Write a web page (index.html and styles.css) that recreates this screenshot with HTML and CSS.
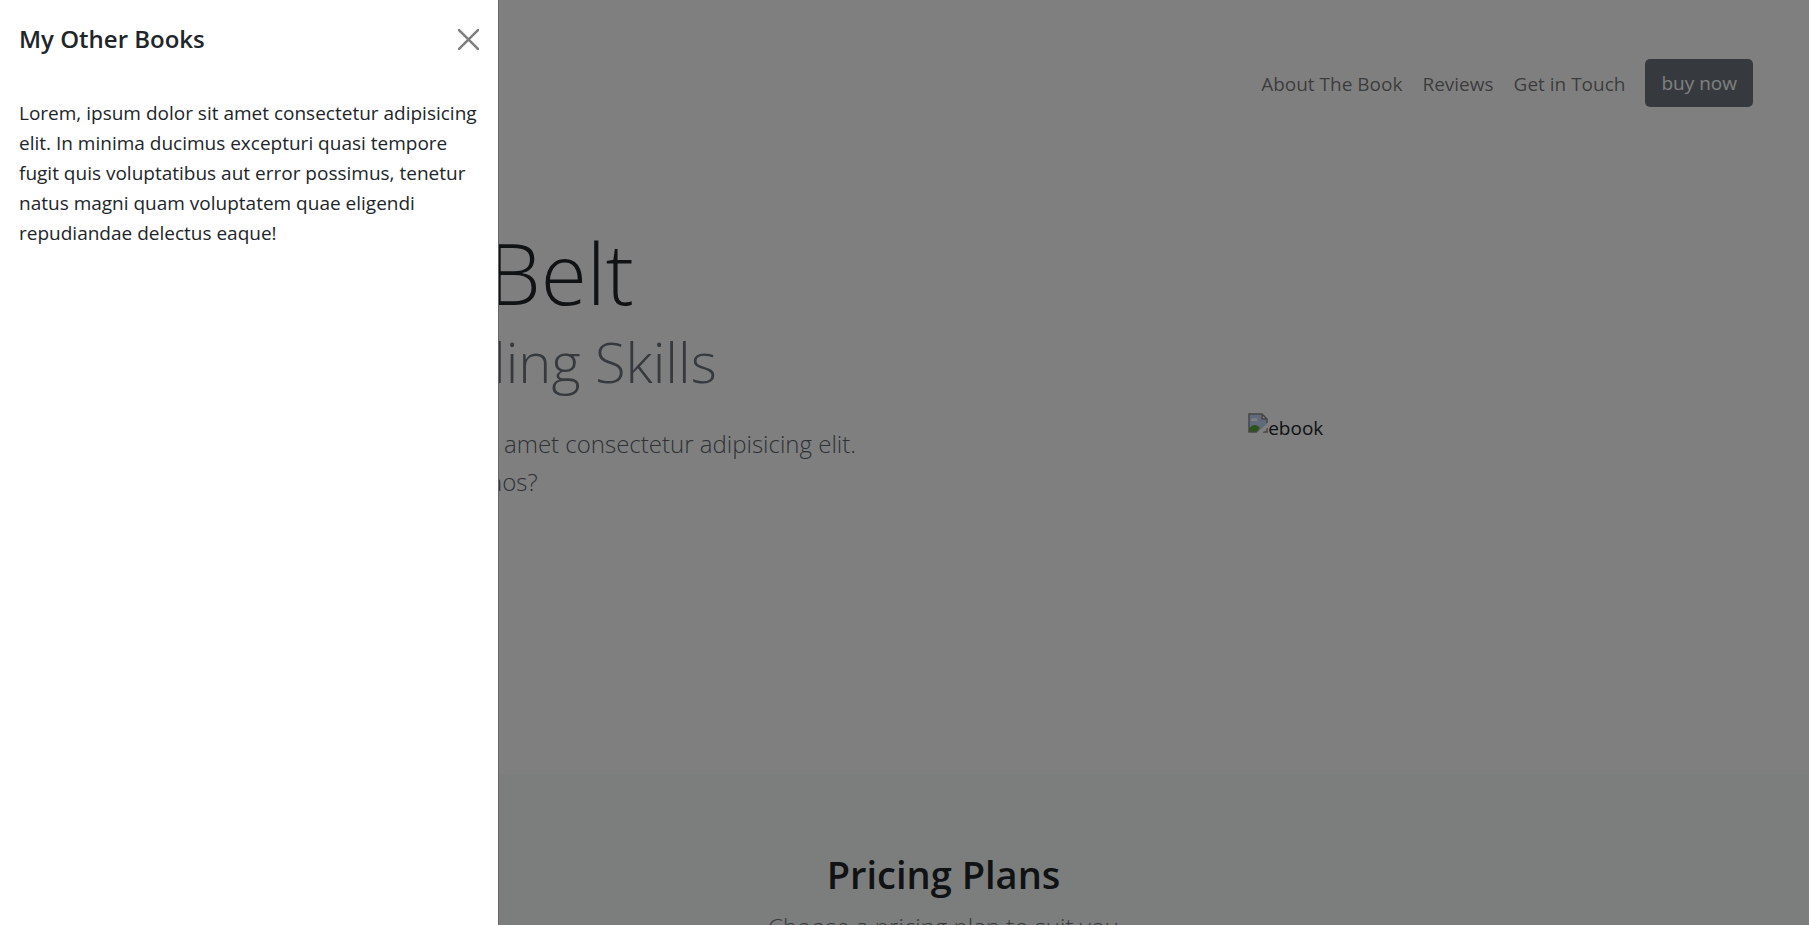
FILE: index.html
```html
<!DOCTYPE html>
<html lang="en">
<head>
<meta charset="utf-8">
<meta name="viewport" content="width=device-width, initial-scale=1">
<title>My Other Books</title>
<link rel="stylesheet" href="styles.css">
</head>
<body>
<div class="page">
  <header class="navbar">
    <nav class="nav-links">
      <a class="nav-link" href="#about">About The Book</a>
      <a class="nav-link" href="#reviews">Reviews</a>
      <a class="nav-link" href="#contact">Get in Touch</a>
      <a class="btn" href="#pricing">buy now</a>
    </nav>
  </header>
  <main>
    <section class="hero" id="about">
      <div class="hero-text">
        <h1><span class="display">Belt</span><span class="subtitle">ling Skills</span></h1>
        <p class="lead"><span class="lead-line">amet consectetur adipisicing elit.</span><span class="lead-end">nos?</span></p>
      </div>
      <div class="hero-image">
        <svg class="broken" viewBox="0 0 20 20" aria-hidden="true">
          <path d="M1 1h13l5 5v5l-9 8H1z" fill="#c3d5f5"/>
          <path d="M3 7c0-2 3-2 3-1 1-2 4-1 3 2H3z" fill="#fff"/>
          <path d="M1 19v-3c3-5 8-5 11-1l-3 4z" fill="#54a838"/>
          <path d="M14 1v5h5z" fill="#fff"/>
          <path d="M19 10V6l-5-5H1v18h8M14 1v5h5M15 19h4v-4" fill="none" stroke="#8c8c8c" stroke-width="1.5"/>
          <path d="M9 20L20 10v4l-6 6z" fill="#fff"/>
        </svg><span>ebook</span>
      </div>
    </section>
    <section class="pricing" id="pricing">
      <h2>Pricing Plans</h2>
      <p class="lead">Choose a pricing plan to suit you</p>
    </section>
  </main>
</div>
<div class="backdrop"></div>
<aside class="drawer" role="dialog" aria-labelledby="drawer-title">
  <div class="drawer-header">
    <h5 id="drawer-title">My Other Books</h5>
    <button class="close" type="button" aria-label="Close">
      <svg viewBox="0 0 20 20" aria-hidden="true"><path d="M1 1l18 18M19 1L1 19" stroke="#000" stroke-width="2.4" stroke-linecap="round"/></svg>
    </button>
  </div>
  <p class="drawer-body">Lorem, ipsum dolor sit amet consectetur adipisicing elit. In minima ducimus excepturi quasi tempore fugit quis voluptatibus aut error possimus, tenetur natus magni quam voluptatem quae eligendi repudiandae delectus eaque!</p>
</aside>
</body>
</html>
```
FILE: styles.css
```css
* { box-sizing: border-box; }
body {
  margin: 0;
  height: 100vh;
  overflow: hidden;
  font: 400 19px/30px "Open Sans", "Noto Sans", sans-serif;
  color: #212529;
  background: #fff;
}
h1, h2, h5, p { margin: 0; }
.page { height: 100vh; overflow: hidden; }
.navbar { padding: 59px 56px 0 0; }
.nav-links {
  display: flex;
  justify-content: flex-end;
  align-items: center;
  gap: 20px;
}
.nav-links a { text-decoration: none; }
.nav-link { padding-top: 2px; color: rgba(0, 0, 0, .55); }
.btn {
  padding: 9px 16px;
  border-radius: 5px;
  background: #6c757d;
  color: #fff;
}
.hero {
  display: grid;
  grid-template-columns: 69% 1fr;
  align-items: center;
  height: 667px;
  padding-bottom: 26px;
}
.hero-text { padding: 0 0 140px 488px; }
.hero h1 { font-weight: 300; }
.display { display: block; font-size: 84px; line-height: 116px; }
.subtitle {
  display: block;
  padding-left: 5px;
  font-size: 56px;
  line-height: 60px;
  color: #6c757d;
}
.lead { font-size: 24px; line-height: 38px; font-weight: 300; color: #6c757d; }
.hero .lead { margin-top: 34px; color: #5c646b; }
.lead-line, .lead-end { display: block; }
.lead-line { padding-left: 16px; }
.hero-image { display: flex; align-items: flex-start; }
.broken { width: 20px; height: 20px; }
.pricing {
  padding: 76px 0 0 78px;
  height: 400px;
  background: #f7fcf9;
  text-align: center;
}
.pricing h2 { font-size: 38px; line-height: 48px; font-weight: 600; }
.pricing .lead { margin-top: 10px; }
.backdrop { position: fixed; inset: 0; background: rgba(0, 0, 0, .5); }
.drawer {
  position: fixed;
  inset: 0 auto 0 0;
  width: 499px;
  max-width: 100%;
  background: #fff;
  border-right: 1px solid #666;
}
.drawer-header {
  display: flex;
  align-items: center;
  justify-content: space-between;
  padding: 20px 19px 18px;
}
.drawer-header h5 { font-size: 24px; line-height: 38px; font-weight: 600; }
.close {
  display: flex;
  padding: 0;
  border: 0;
  background: none;
  opacity: .5;
  cursor: pointer;
}
.close svg { width: 21px; height: 21px; }
.drawer-body { padding: 22px 19px; }
```
